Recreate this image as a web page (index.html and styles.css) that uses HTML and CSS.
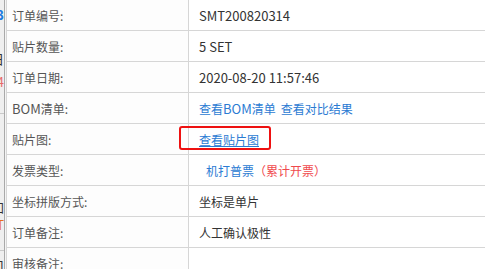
FILE: index.html
```html
<!DOCTYPE html>
<html lang="zh-CN">
<head>
<meta charset="utf-8">
<title>订单详情</title>
<link rel="stylesheet" href="styles.css">
</head>
<body>
<div class="page">
  <div class="side">
    <div class="side-inner">
      <div class="frag frag-blue f1">123</div>
      <div class="frag f2">明日</div>
      <div class="frag frag-red f3">234</div>
      <div class="side-line l1"></div>
      <div class="frag f4">增加</div>
      <div class="frag frag-orange f5">打T</div>
      <div class="side-line l2"></div>
      <div class="frag f6">口</div>
    </div>
  </div>
  <div class="gap"></div>
  <div class="table">
    <div class="row">
      <div class="label">订单编号:</div>
      <div class="value"><span class="lat">SMT200820314</span></div>
    </div>
    <div class="row">
      <div class="label">贴片数量:</div>
      <div class="value"><span class="lat">5 SET</span></div>
    </div>
    <div class="row">
      <div class="label">订单日期:</div>
      <div class="value"><span class="lat">2020-08-20 11:57:46</span></div>
    </div>
    <div class="row">
      <div class="label"><span class="lat">BOM</span>清单:</div>
      <div class="value"><a class="link">查看<span class="lat">BOM</span>清单</a><a class="link link-gap">查看对比结果</a></div>
    </div>
    <div class="row">
      <div class="label">贴片图:</div>
      <div class="value"><a class="link link-u">查看贴片图</a></div>
      <div class="mark"></div>
    </div>
    <div class="row">
      <div class="label">发票类型:</div>
      <div class="value"><span class="link invoice">机打普票</span><span class="red">（累计开票）</span></div>
    </div>
    <div class="row">
      <div class="label">坐标拼版方式:</div>
      <div class="value">坐标是单片</div>
    </div>
    <div class="row">
      <div class="label">订单备注:</div>
      <div class="value">人工确认极性</div>
    </div>
    <div class="row">
      <div class="label">审核备注:</div>
      <div class="value"></div>
    </div>
  </div>
</div>
</body>
</html>
```

FILE: styles.css
```css
html, body {
  margin: 0;
  padding: 0;
  background: #ffffff;
}
body {
  font-family: "Noto Sans CJK SC", "Noto Sans", sans-serif;
  font-size: 12px;
  overflow: hidden;
  width: 485px;
  height: 269px;
}
.page {
  display: flex;
  height: 269px;
  overflow: hidden;
}
.side {
  width: 4px;
  flex: none;
  background: #efefef;
  border-right: 1px solid #a9a9a9;
  overflow: hidden;
}
.side-inner {
  display: flex;
  flex-direction: column;
  align-items: flex-end;
  width: 4px;
}
.frag {
  display: flex;
  justify-content: flex-end;
  width: 4px;
  white-space: nowrap;
  font-size: 13px;
  line-height: 14px;
  color: #333;
}
.frag-blue { color: #1c7be0; font-weight: bold; }
.frag-red { color: #e86a6a; }
.frag-orange { color: #e8701c; }
.f1 { margin-top: 8px; }
.f2 { margin-top: 30px; }
.f3 { margin-top: 9px; }
.side-line { width: 4px; height: 1px; background: #c9c9c9; }
.l1 { margin-top: 24px; }
.f4 { margin-top: 86px; }
.f5 { margin-top: 4px; }
.l2 { margin-top: 18px; }
.f6 { margin-top: 7px; }
.gap {
  width: 1px;
  flex: none;
  background: #f4f4f4;
}
.table {
  flex: 1;
  display: flex;
  flex-direction: column;
  border-left: 1px solid #d6d6d6;
}
.row {
  display: flex;
  height: 30px;
  flex: none;
  border-bottom: 1px solid #d6d6d6;
  position: relative;
}
.label {
  width: 176px;
  flex: none;
  padding-left: 5px;
  border-right: 1px solid #d6d6d6;
  color: #555;
  display: flex;
  align-items: center;
  background: #fdfdfd;
  white-space: nowrap;
}
.value {
  flex: 1;
  padding-left: 10px;
  color: #333;
  display: flex;
  align-items: center;
  white-space: nowrap;
}
.lat {
  font-size: 13px;
}
.link {
  color: #2b7bd3;
  text-decoration: none;
}
.link-gap { margin-left: 5px; }
.link-u { text-decoration: underline; }
.invoice { margin-left: 7px; }
.red { color: #f0494d; }
.mark {
  position: absolute;
  left: 172px;
  top: 2px;
  width: 88px;
  height: 20px;
  border: 2.5px solid #ee1111;
  border-radius: 3px;
}
```
